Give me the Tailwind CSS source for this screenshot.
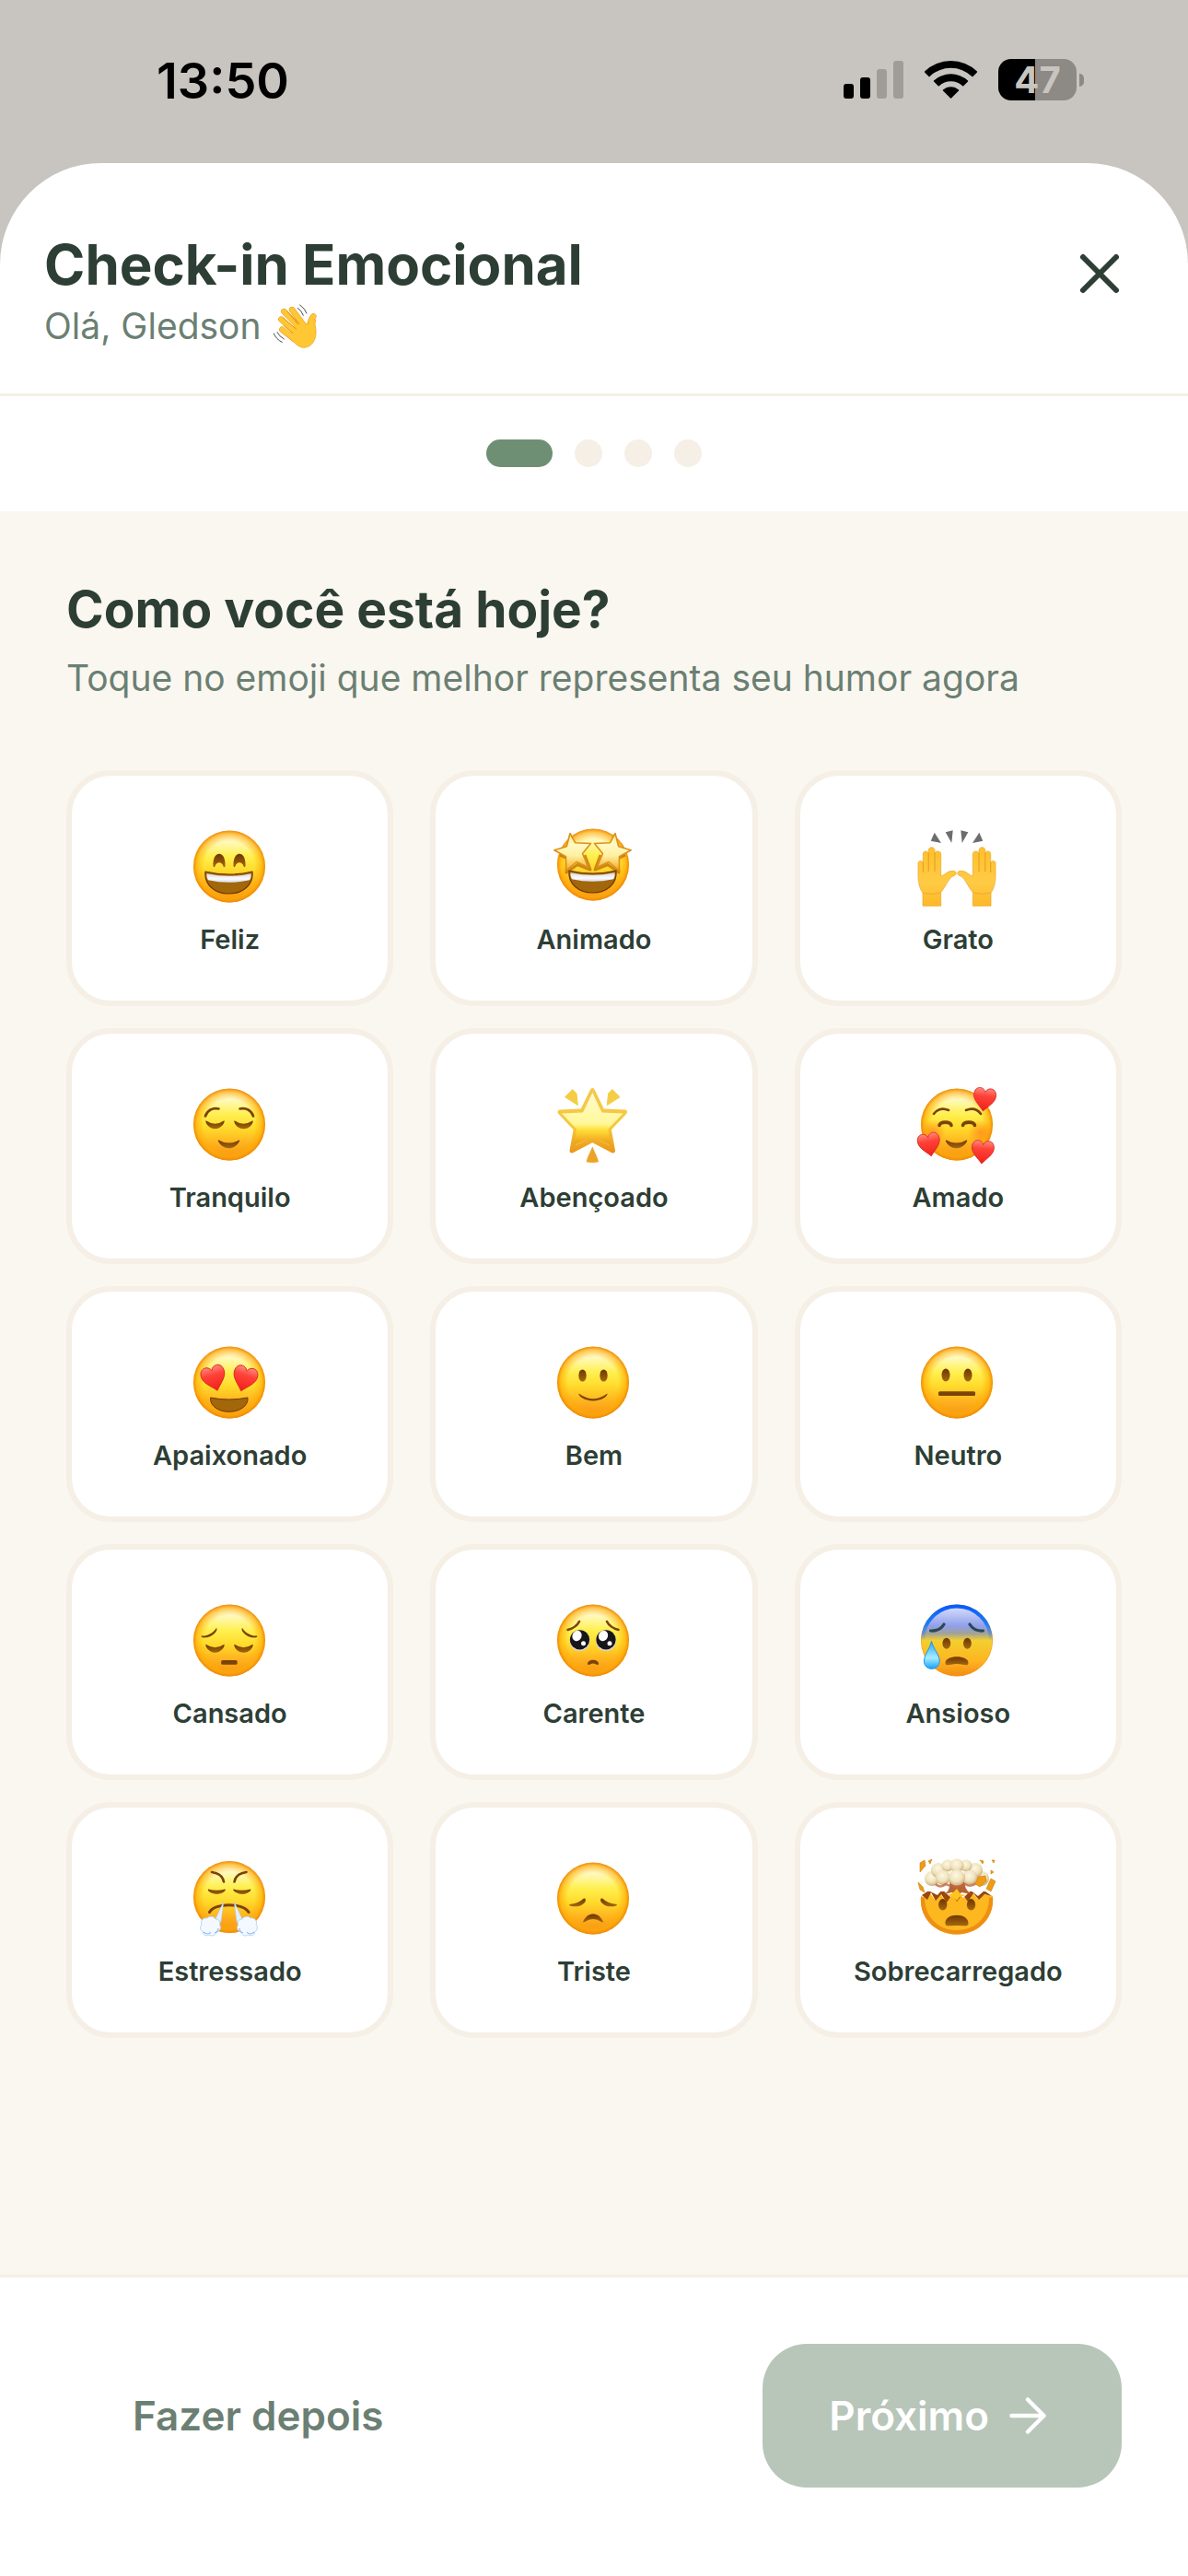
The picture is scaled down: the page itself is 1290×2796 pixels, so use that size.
<!DOCTYPE html>
<html lang="pt-BR">
<head>
    <meta charset="UTF-8">
    <meta name="viewport" content="width=device-width, initial-scale=1.0">
    <title>Check-in Emocional</title>
    <script src="https://cdn.jsdelivr.net/npm/@tailwindcss/browser@4"></script>
</head>
<body class="min-h-screen flex flex-col bg-[#c8c4bf] font-['Inter','Liberation_Sans',sans-serif] text-[#2d3e35]">

    <!-- shared emoji parts -->
    <svg class="absolute w-0 h-0" aria-hidden="true">
        <defs>
            <linearGradient id="skin" x1="0" y1="0" x2="0" y2="1">
                <stop offset="0" stop-color="#fffde0"/>
                <stop offset=".12" stop-color="#fffbd0"/>
                <stop offset=".36" stop-color="#fff050"/>
                <stop offset=".55" stop-color="#ffdb2c"/>
                <stop offset=".76" stop-color="#ffb31f"/>
                <stop offset="1" stop-color="#f28c14"/>
            </linearGradient>
            <radialGradient id="rim">
                <stop offset=".7" stop-color="#ffae00" stop-opacity="0"/>
                <stop offset=".9" stop-color="#ffab08" stop-opacity=".65"/>
                <stop offset="1" stop-color="#ee8806"/>
            </radialGradient>
            <linearGradient id="skinBlue" x1="0" y1="0" x2="0" y2="1">
                <stop offset="0" stop-color="#dfe4ff"/>
                <stop offset=".3" stop-color="#8f9fea"/>
                <stop offset=".4" stop-color="#a0a19a"/>
                <stop offset=".5" stop-color="#f2cf30"/>
                <stop offset=".8" stop-color="#ffb31f"/>
                <stop offset="1" stop-color="#f28c14"/>
            </linearGradient>
            <linearGradient id="rimFade" x1="0" y1="0" x2="0" y2="1">
                <stop offset="0" stop-color="#0a5cff"/>
                <stop offset=".25" stop-color="#1e7bf2"/>
                <stop offset=".5" stop-color="#1e7bf2" stop-opacity="0"/>
            </linearGradient>
            <linearGradient id="starFill" x1="0" y1="0" x2="0" y2="1">
                <stop offset="0" stop-color="#ffeb7a"/>
                <stop offset=".3" stop-color="#fff9c4"/>
                <stop offset=".6" stop-color="#fff0a0"/>
                <stop offset="1" stop-color="#f5a81c"/>
            </linearGradient>
            <linearGradient id="bigStar" x1="0" y1="0" x2="0" y2="1">
                <stop offset="0" stop-color="#fffad0"/>
                <stop offset=".6" stop-color="#fff89a"/>
                <stop offset=".72" stop-color="#ffdf3a"/>
                <stop offset="1" stop-color="#ee9a18"/>
            </linearGradient>
            <linearGradient id="bigStarEdge" x1="0" y1="0" x2="0" y2="1">
                <stop offset="0" stop-color="#f3c94e"/>
                <stop offset=".6" stop-color="#f6c83c"/>
                <stop offset="1" stop-color="#ea9a1c"/>
            </linearGradient>
            <linearGradient id="handFill" x1="0" y1="0" x2="0" y2="1">
                <stop offset="0" stop-color="#ffc02a"/>
                <stop offset=".6" stop-color="#ffcb45"/>
                <stop offset="1" stop-color="#fdb827"/>
            </linearGradient>
            <linearGradient id="heartFill" x1="0" y1="0" x2="0" y2="1">
                <stop offset="0" stop-color="#ff8a80"/>
                <stop offset=".35" stop-color="#ff4238"/>
                <stop offset="1" stop-color="#f0201c"/>
            </linearGradient>
            <linearGradient id="brown" x1="0" y1="0" x2="0" y2="1">
                <stop offset="0" stop-color="#6e3604"/>
                <stop offset="1" stop-color="#a4690c"/>
            </linearGradient>
            <linearGradient id="teeth" x1="0" y1="0" x2="0" y2="1">
                <stop offset="0" stop-color="#d9dbe4"/>
                <stop offset=".6" stop-color="#fbfbff"/>
                <stop offset="1" stop-color="#d5d8e0"/>
            </linearGradient>
            <linearGradient id="drop" x1="0" y1="0" x2="0" y2="1">
                <stop offset="0" stop-color="#2aa6f0"/>
                <stop offset=".6" stop-color="#a6ecff"/>
                <stop offset="1" stop-color="#18a0fb"/>
            </linearGradient>
            <radialGradient id="blush">
                <stop offset="0" stop-color="#ff7a18" stop-opacity=".65"/>
                <stop offset="1" stop-color="#ff7a18" stop-opacity="0"/>
            </radialGradient>
            <radialGradient id="puff" cx=".45" cy=".35" r=".65">
                <stop offset="0" stop-color="#fdf8e4"/>
                <stop offset=".6" stop-color="#efe3bd"/>
                <stop offset="1" stop-color="#cfac7a"/>
            </radialGradient>
            <g id="face">
                <circle cx="49" cy="50.5" r="39" fill="url(#skin)"/>
                <circle cx="49" cy="50.5" r="39" fill="url(#rim)"/>
            </g>
            <g id="grin">
                <path d="M23 56Q48.500 62 74 56C75.500 70 64 80 48.500 80S21.500 70 23 56Z" fill="#a2670b" stroke="#713805" stroke-width="1.200" stroke-linejoin="round"/>
                <path d="M24.500 58.200Q48.500 63.500 72.500 58.200C73 62 72 64 71 65.200Q48.500 70.500 26 65.200C25 63 24 61 24.500 58.200Z" fill="url(#teeth)"/>
            </g>
            <path id="closedEye" d="M23.500 46.300Q33.500 53 43.500 46.300C44.500 49 40 55.200 33.500 55.200S22.500 49 23.500 46.300Z" fill="url(#brown)"/>
            <path id="smallSmile" d="M37 67.200Q48.500 74 60 67.200C61 69 56 76.300 48.500 76.300S36 69 37 67.200Z" fill="url(#brown)"/>
            <path id="heart" d="M12 25C7 19 0 14.500 0 7.500C0-1.500 10-2 12 4.500C14-2 24-1.500 24 7.500C24 14.500 17 19 12 25Z" fill="url(#heartFill)" stroke="#d8231f" stroke-width=".8"/>
            <path id="sadBrow" d="M18.800 45.500C25 46 31 43 35 37C37.500 39 31 48 21 47.500C19 47.300 18.300 46.500 18.800 45.500Z" fill="#7b4306"/>
            <path id="eyeStar" d="M24 14.500L29.500 24.700L46.500 25.500L37.500 36.500L43.800 51.500L31 45.500L19.700 55L19.500 39.700L6.800 32.700L20.300 28.800Z" fill="url(#starFill)" stroke="#dd8f1c" stroke-width="1.600" stroke-linejoin="round"/>
            <g id="palm">
                <path d="M12 93.300V79C8 74 7 66 7 60V47C7 43.500 12.300 43.500 12.300 47V37C12.300 33 18.200 33 18.200 37V33C18.200 28.500 25 28.500 25 33V37C25 33 31.700 33 31.700 37V61C36 60 38 55.500 44 55.300C49 55 49.500 59 46 60.500C40 62.500 38 71 31.700 78.500V93.300Z" fill="url(#handFill)" stroke="#eba52a" stroke-width=".7"/>
                <path d="M12.300 46V57M18.200 36V56M25 36V56" fill="none" stroke="#e59a1e" stroke-width="1"/>
                <path d="M12 79Q21 82 31 79" fill="none" stroke="#f0a928" stroke-width="1"/>
            </g>
            <g id="ticks" fill="#6d6d6d">
                <path d="M24.700 13.700L20.700 22.700L32 25Z"/>
                <path d="M36.700 13.300L44.700 11.300L43.300 25Z"/>
            </g>
            <g id="steam">
                <path d="M42.800 54L34 73L40 76Z" fill="#e3f0ff" stroke="#a9cdf5" stroke-width=".5"/>
                <path d="M25 72C27 69 33 70 34 73C38 73 40 76 38.500 79C41 83 38 87 35 87C34 91 30 92 28 90C24 92 20 90 20.500 87C17 85 17 81 19 79C17 75 21 71 25 72Z" fill="#f4f9ff" stroke="#b4d4fa" stroke-width="1"/>
                <path d="M21 87Q26 91 29 87M33 88Q37 87 37 83" fill="none" stroke="#8fbcf5" stroke-width="1.200"/>
            </g>
        </defs>
    </svg>

    <!-- status bar -->
    <div class="h-[177px] shrink-0 flex items-start justify-between pt-[54px] pl-[170px] pr-[113px] text-black">
        <span class="text-[54px] leading-[68px] font-semibold">13:50</span>
        <div class="flex items-center gap-[23px] pt-[10px]">
            <svg class="w-[65px] h-[45px]" viewBox="0 0 65 45" aria-hidden="true">
                <rect x="0" y="27" width="11" height="16" rx="3"/>
                <rect x="18" y="20" width="11" height="23" rx="3"/>
                <rect x="36" y="11" width="11" height="32" rx="3" fill="#a09c97"/>
                <rect x="54" y="2" width="11" height="41" rx="3" fill="#a09c97"/>
            </svg>
            <svg class="w-[57px] h-[45px]" viewBox="0 0 57 45" aria-hidden="true">
                <path d="M0 13.500A41 41 0 0 1 57 13.500Q57.500 14 57 14.500L52.500 19Q52 19.500 51.400 19A33 33 0 0 0 5.600 19Q5 19.500 4.500 19L0 14.500Q-.5 14 0 13.500Z"/>
                <path d="M10 23.500A27.500 27.500 0 0 1 47 23.500Q47.500 24 47 24.500L42.300 29.200Q41.800 29.700 41.200 29.200A19 19 0 0 0 15.800 29.200Q15.200 29.700 14.700 29.200L10 24.500Q9.500 24 10 23.500Z"/>
                <path d="M20 33.500A12.500 12.500 0 0 1 37 33.500Q37.500 34 37 34.500L29 42.500Q28.500 43 28 42.500L20 34.500Q19.500 34 20 33.500Z"/>
            </svg>
            <div class="flex items-center gap-[3px]">
                <div class="w-[85px] h-[45px] rounded-[14px] bg-linear-to-r from-black from-47% to-[#8d8985] to-47% flex items-center justify-center text-[40px] leading-[45px] font-bold text-[#c8c4bf]">47</div>
                <div class="w-[5px] h-[14px] rounded-r-full bg-[#8d8985]"></div>
            </div>
        </div>
    </div>

    <div class="grow flex flex-col bg-white rounded-t-[110px] overflow-hidden">
        <header class="flex items-start justify-between px-12 pt-[72px] pb-12 border-b-3 border-[#f5efe6]">
            <div>
                <h1 class="text-[60px] leading-[76px] font-bold">Check-in Emocional</h1>
                <p class="mt-1 flex items-center gap-3 text-[39px] leading-[50px] text-[#6b7f73]">
                    Olá, Gledson
                    <svg class="w-[50px] h-[50px]" viewBox="50 55 150 150" role="img" aria-label="Mão acenando">
                        <g fill="none" stroke-linecap="round" stroke-linejoin="round">
                            <g stroke="#e89c1c" stroke-width="19">
                                <path d="M113 76L150 125M87 82L135 132M78 108L122 148M81 141L120 172M183 98Q172 110 172 130"/>
                            </g>
                            <path d="M122 130L150 118L166 124Q178 108 190 108Q186 125 191 142C194 176 176 199 152 200C132 199 122 184 104 166Z" fill="#ffc734" stroke="#e89c1c" stroke-width="2"/>
                            <g stroke="#ffc734" stroke-width="16">
                                <path d="M113 76L152 128M87 82L140 140M78 108L130 155M81 141L125 175M183 98Q172 110 174 134"/>
                            </g>
                            <path d="M98 82L132 123M85 103L127 140M86 128L116 153" stroke="#dd8c14" stroke-width="2.500"/>
                            <g stroke="#4d4d4d" stroke-width="3">
                                <path d="M132 71Q145 80 150 95M139 61Q155 72 161 88M54 154Q62 174 81 182M65 150Q72 164 87 172"/>
                            </g>
                        </g>
                    </svg>
                </p>
            </div>
            <button type="button" aria-label="Fechar" class="w-24 h-24 flex items-center justify-center">
                <svg class="w-[72px] h-[72px]" viewBox="0 0 24 24" fill="none" stroke="currentColor" stroke-width="2" stroke-linecap="round">
                    <path d="M18 6L6 18M6 6l12 12"/>
                </svg>
            </button>
        </header>

        <div class="flex justify-center gap-6 pt-[47px] pb-12">
            <span class="w-[72px] h-[30px] rounded-full bg-[#6f8f74]"></span>
            <span class="w-[30px] h-[30px] rounded-full bg-[#f5efe6]"></span>
            <span class="w-[30px] h-[30px] rounded-full bg-[#f5efe6]"></span>
            <span class="w-[30px] h-[30px] rounded-full bg-[#f5efe6]"></span>
        </div>

        <main class="grow bg-[#faf7f0] p-[72px]">
            <h2 class="text-[55px] leading-[68px] font-bold">Como você está hoje?</h2>
            <p class="mt-3 text-[39px] leading-[58px] text-[#6b7f73]">Toque no emoji que melhor representa seu humor agora</p>

            <div class="mt-[71px] grid grid-cols-3 gap-x-10 gap-y-6 text-[29px] leading-9 font-semibold">
                <button type="button" class="flex flex-col items-center gap-3 py-12 rounded-[48px] border-6 border-[#f5efe6] bg-white">
                    <svg class="w-[100px] h-[100px]" viewBox="0 0 100 100" aria-hidden="true">
                        <use href="#face"/>
                        <path id="arch" d="M31.500 50C31 42 34 36.800 38 36.800S45 42 44.500 50C44.300 51.500 43 51.500 42.500 50.200C41 45 35 45 33.500 50.200C33 51.500 31.700 51.500 31.500 50Z" fill="url(#brown)"/>
                        <use href="#arch" x="22"/>
                        <use href="#grin"/>
                    </svg>
                    <span>Feliz</span>
                </button>
                <button type="button" class="flex flex-col items-center gap-3 py-12 rounded-[48px] border-6 border-[#f5efe6] bg-white">
                    <svg class="w-[100px] h-[100px]" viewBox="0 0 100 100" aria-hidden="true">
                        <use href="#face" y="-2"/>
                        <path d="M13 38L21 42L20 57L32 48.500L46 54L40 38M84 38L76 42L77 57L65 48.500L51 54L57 38" fill="none" stroke="#b96208" stroke-opacity=".7" stroke-width="3" stroke-linejoin="round"/>
                        <use href="#grin" y="-1"/>
                        <use href="#eyeStar"/>
                        <use href="#eyeStar" transform="matrix(-1 0 0 1 97 0)"/>
                    </svg>
                    <span>Animado</span>
                </button>
                <button type="button" class="flex flex-col items-center gap-3 py-12 rounded-[48px] border-6 border-[#f5efe6] bg-white">
                    <svg class="w-[100px] h-[100px]" viewBox="0 0 100 100" aria-hidden="true">
                        <use href="#ticks"/>
                        <use href="#ticks" transform="matrix(-1 0 0 1 98 0)"/>
                        <use href="#palm"/>
                        <use href="#palm" transform="matrix(-1 0 0 1 98 0)"/>
                    </svg>
                    <span>Grato</span>
                </button>

                <button type="button" class="flex flex-col items-center gap-3 py-12 rounded-[48px] border-6 border-[#f5efe6] bg-white">
                    <svg class="w-[100px] h-[100px]" viewBox="0 0 100 100" aria-hidden="true">
                        <use href="#face"/>
                        <path d="M23 41.500C25 35 31 32 37.500 33.500M75 41.500C73 35 67 32 60.500 33.500" fill="none" stroke="#7b4306" stroke-width="2.600" stroke-linecap="round"/>
                        <use href="#closedEye"/>
                        <use href="#closedEye" x="31"/>
                        <use href="#smallSmile"/>
                    </svg>
                    <span>Tranquilo</span>
                </button>
                <button type="button" class="flex flex-col items-center gap-3 py-12 rounded-[48px] border-6 border-[#f5efe6] bg-white">
                    <svg class="w-[100px] h-[100px]" viewBox="0 0 100 100" aria-hidden="true">
                        <path d="M48.300 13.500L58.500 34.500Q59 36 61 36L83.500 37L67.500 54Q66 55.500 66.500 57L70.500 79L49.500 68Q48.300 67.500 47 68L26 79L30 57Q30.500 55.500 29 54L13 37L35.500 36Q37.500 36 38 34.500Z" fill="url(#bigStar)" stroke="url(#bigStarEdge)" stroke-width="5" stroke-linejoin="round"/>
                        <path d="M48.300 16L58.500 37.500L81.500 38.500L65.500 55.500L68 72L48.300 65L28.600 72L31 55.500L15 38.500L38 37.500Z" fill="url(#bigStar)"/>
                        <path d="M26.800 12.500L18.500 20.700L32.300 29.500L31 17ZM69.800 12.500L78.100 20.700L64.300 29.500L65.600 17Z" fill="#f5cd45" stroke="#f5cd45" stroke-linejoin="round"/>
                        <path d="M48.300 74.500C50 79 54 86 55 91.300Q48.300 92.500 41.600 91.300C42.600 86 46.600 79 48.300 74.500Z" fill="#eba428"/>
                    </svg>
                    <span>Abençoado</span>
                </button>
                <button type="button" class="flex flex-col items-center gap-3 py-12 rounded-[48px] border-6 border-[#f5efe6] bg-white">
                    <svg class="w-[100px] h-[100px]" viewBox="0 0 100 100" aria-hidden="true">
                        <use href="#face"/>
                        <circle cx="23" cy="59" r="14" fill="url(#blush)"/>
                        <circle cx="75" cy="59" r="14" fill="url(#blush)"/>
                        <path d="M24 39C28 33.500 34 32.500 40 35M75 39C71 33.500 65 32.500 59 35" fill="none" stroke="#7b4306" stroke-width="2.600" stroke-linecap="round"/>
                        <path d="M30 51.500C31 47 42 47 43 51.500M55.500 51.500C56.500 47 67.500 47 68.500 51.500" fill="none" stroke="#7b4306" stroke-width="3.600" stroke-linecap="round"/>
                        <use href="#smallSmile"/>
                        <use href="#heart" transform="translate(67 11) rotate(7 12 12)"/>
                        <use href="#heart" transform="translate(7 60) rotate(-10 12 12)"/>
                        <use href="#heart" transform="translate(65 68) rotate(5 12 12)"/>
                    </svg>
                    <span>Amado</span>
                </button>

                <button type="button" class="flex flex-col items-center gap-3 py-12 rounded-[48px] border-6 border-[#f5efe6] bg-white">
                    <svg class="w-[100px] h-[100px]" viewBox="0 0 100 100" aria-hidden="true">
                        <use href="#face"/>
                        <use href="#heart" transform="translate(19 33) rotate(-16 12 12) scale(1.080)"/>
                        <use href="#heart" transform="translate(53 33) rotate(16 12 12) scale(1.080)"/>
                        <path d="M28.600 67Q48.500 71 69 67C70 76 60 82.300 48.700 82.300S27.600 76 28.600 67Z" fill="#a2670b" stroke="#713805" stroke-linejoin="round"/>
                    </svg>
                    <span>Apaixonado</span>
                </button>
                <button type="button" class="flex flex-col items-center gap-3 py-12 rounded-[48px] border-6 border-[#f5efe6] bg-white">
                    <svg class="w-[100px] h-[100px]" viewBox="0 0 100 100" aria-hidden="true">
                        <use href="#face"/>
                        <ellipse cx="37.500" cy="43" rx="4.200" ry="6.600" fill="url(#brown)"/>
                        <ellipse cx="60.500" cy="43" rx="4.200" ry="6.600" fill="url(#brown)"/>
                        <path d="M33.500 62.500Q49 74 64.500 62.500C65.500 65 58 70.500 49 70.500S32.500 65 33.500 62.500Z" fill="#7b4306"/>
                    </svg>
                    <span>Bem</span>
                </button>
                <button type="button" class="flex flex-col items-center gap-3 py-12 rounded-[48px] border-6 border-[#f5efe6] bg-white">
                    <svg class="w-[100px] h-[100px]" viewBox="0 0 100 100" aria-hidden="true">
                        <use href="#face"/>
                        <ellipse cx="37" cy="42.500" rx="4.500" ry="7" fill="url(#brown)"/>
                        <ellipse cx="61" cy="42.500" rx="4.500" ry="7" fill="url(#brown)"/>
                        <rect x="29" y="60.300" width="40" height="4.600" rx="1.500" fill="#7b4306"/>
                    </svg>
                    <span>Neutro</span>
                </button>

                <button type="button" class="flex flex-col items-center gap-3 py-12 rounded-[48px] border-6 border-[#f5efe6] bg-white">
                    <svg class="w-[100px] h-[100px]" viewBox="0 0 100 100" aria-hidden="true">
                        <use href="#face"/>
                        <use href="#sadBrow"/>
                        <use href="#sadBrow" transform="matrix(-1 0 0 1 98 0)"/>
                        <use href="#closedEye" y="8.500"/>
                        <use href="#closedEye" x="31" y="8.500"/>
                        <rect x="40.200" y="72" width="17.400" height="4.800" rx="1.500" fill="#7b4306"/>
                    </svg>
                    <span>Cansado</span>
                </button>
                <button type="button" class="flex flex-col items-center gap-3 py-12 rounded-[48px] border-6 border-[#f5efe6] bg-white">
                    <svg class="w-[100px] h-[100px]" viewBox="0 0 100 100" aria-hidden="true">
                        <use href="#face"/>
                        <path d="M21.500 39C27 37.500 31.500 35 34 30M76.500 39C71 37.500 66.500 35 64 30" fill="none" stroke="#7b4306" stroke-width="2.600" stroke-linecap="round"/>
                        <g id="puppyEye">
                            <circle cx="34.500" cy="51" r="11" fill="#d9d6dc"/>
                            <circle cx="34.500" cy="49.800" r="10.600" fill="#17171b"/>
                            <ellipse cx="31.500" cy="45.500" rx="5" ry="5.800" fill="#fff" transform="rotate(20 31.500 45.500)"/>
                            <circle cx="38.500" cy="53.700" r="2.500" fill="#fff"/>
                        </g>
                        <use href="#puppyEye" x="28.500"/>
                        <path d="M43 76.500C42 70 56 70 55 76.500C53 78 52 75.500 49 75.500S45 78 43 76.500Z" fill="#7b4306"/>
                    </svg>
                    <span>Carente</span>
                </button>
                <button type="button" class="flex flex-col items-center gap-3 py-12 rounded-[48px] border-6 border-[#f5efe6] bg-white">
                    <svg class="w-[100px] h-[100px]" viewBox="0 0 100 100" aria-hidden="true">
                        <circle cx="49" cy="50.500" r="39" fill="url(#rim)"/>
                        <circle cx="49" cy="50.500" r="38.500" fill="url(#skinBlue)"/>
                        <circle cx="49" cy="50.500" r="37" fill="none" stroke="url(#rimFade)" stroke-width="4"/>
                        <path d="M20.500 40C27 40.500 32 38 35 33M77.500 40C71 40.500 66 38 63 33" fill="none" stroke="#2c4856" stroke-width="3.200" stroke-linecap="round"/>
                        <ellipse cx="37.800" cy="53.800" rx="4.400" ry="6" fill="url(#brown)"/>
                        <ellipse cx="60.400" cy="53.800" rx="4.400" ry="6" fill="url(#brown)"/>
                        <path d="M36.500 75C36 66 62 66 61.500 75C61 79.500 57 76 49 76S37 79.500 36.500 75Z" fill="url(#brown)"/>
                        <path d="M21.500 51.500C23.500 60 30.200 66 30.200 73C30.200 78 26.500 81.300 21.800 81.300S13.400 78 13.400 73C13.400 66 19.500 60 21.500 51.500Z" fill="url(#drop)" stroke="#1595f0" stroke-width="1"/>
                    </svg>
                    <span>Ansioso</span>
                </button>

                <button type="button" class="flex flex-col items-center gap-3 py-12 rounded-[48px] border-6 border-[#f5efe6] bg-white">
                    <svg class="w-[100px] h-[100px]" viewBox="0 0 100 100" aria-hidden="true">
                        <use href="#face" y="-1.500"/>
                        <path d="M30 22C37 23 42 27 43 32.500M67.500 22C60.500 23 55.500 27 54.500 32.500" fill="none" stroke="#7b4306" stroke-width="2.600" stroke-linecap="round"/>
                        <path id="flatEye" d="M26 40.500Q35 43 44.500 40.500C46 42 41 46 35.500 46S24.500 42 26 40.500Z" fill="url(#brown)"/>
                        <use href="#flatEye" x="27.500"/>
                        <path d="M27.500 65.500C33 55 64 55 70 65.500" fill="none" stroke="#7b4306" stroke-width="3" stroke-linecap="round"/>
                        <use href="#steam"/>
                        <use href="#steam" transform="matrix(-1 0 0 1 97 0)"/>
                    </svg>
                    <span>Estressado</span>
                </button>
                <button type="button" class="flex flex-col items-center gap-3 py-12 rounded-[48px] border-6 border-[#f5efe6] bg-white">
                    <svg class="w-[100px] h-[100px]" viewBox="0 0 100 100" aria-hidden="true">
                        <use href="#face"/>
                        <path id="droopEye" d="M23.500 57C30 56.500 35 54 39 50.500C41 50 41.500 52.500 40 55C36 60 28 60 24 58.500C23 58 23 57.300 23.500 57Z" fill="url(#brown)"/>
                        <use href="#droopEye" transform="matrix(-1 0 0 1 98 0)"/>
                        <path d="M38 76C41 69.500 45 67.500 49 67.500S57 69.500 60 76C59.500 78 55 73 49 73S38.500 78 38 76Z" fill="url(#brown)"/>
                    </svg>
                    <span>Triste</span>
                </button>
                <button type="button" class="flex flex-col items-center gap-3 py-12 rounded-[48px] border-6 border-[#f5efe6] bg-white">
                    <svg class="w-[100px] h-[100px]" viewBox="0 0 100 100" aria-hidden="true">
                        <path d="M10 48L17 50L20 45L25 52L31 46L37 53L43 45L49 52L54 46L60 52L66 45L72 51L78 46L88 48C90 73 71 89.500 49 89.500S8 73 10 48Z" fill="#fdb71f"/>
                        <path d="M88 49C90 73 71 89.500 49 89.500S8 73 10 49L14 50C14 70 28 85 49 85S84 70 84 50Z" fill="#ef8f12"/>
                        <path d="M11 47L17 52L21 44L26 53L32 46L38 55L44 46L49 54L55 46L61 54L67 45L73 52L79 46L87 48L80 43H17Z" fill="#9a4708"/>
                        <path d="M20 43L28 47L33 41L42 49L49 43L56 50L64 42L72 48L79 42L70 36L28 37Z" fill="#fff"/>
                        <path d="M41 30H58C56 37 60 43 65 46L54 44L49 49L44 44L35 46C41 43 42 37 41 30Z" fill="#b76434"/>
                        <path d="M39 47L44 45L49 40L53 46L59 47L52 49L49 53L45 49Z" fill="#ffc51f"/>
                        <g fill="url(#puff)">
                            <circle cx="22" cy="29" r="8"/>
                            <circle cx="76" cy="29" r="8"/>
                            <circle cx="29" cy="20" r="8"/>
                            <circle cx="69" cy="20" r="8"/>
                            <circle cx="39" cy="15" r="6.500"/>
                            <circle cx="59" cy="15" r="6.500"/>
                            <circle cx="49" cy="15" r="7.500"/>
                            <circle cx="34" cy="28" r="8"/>
                            <circle cx="63" cy="28" r="8"/>
                            <circle cx="49" cy="28" r="9"/>
                        </g>
                        <path d="M26 35Q31 40 37 35Q48 41 58 35Q64 39 70 34" fill="none" stroke="#c0683c" stroke-width="2.500" stroke-opacity=".8"/>
                        <path d="M9 12L14 9L15 15L9 22ZM7 33L12 38L14 44L9 41ZM72 27L80 26L81 32L74 38L69 35ZM86 29L91 32L86 43L81 40ZM18 10L22 8L20 13ZM74 9L78 10L77 13ZM87 9L90 9L89 12ZM86 20L89 22L86 24Z" fill="#ef9c14" stroke="#c97a10" stroke-width=".6"/>
                        <ellipse cx="33.700" cy="57.300" rx="4.600" ry="6.200" fill="url(#brown)"/>
                        <ellipse cx="64.500" cy="57.300" rx="4.600" ry="6.200" fill="url(#brown)"/>
                        <path d="M36.500 78C35 65.500 62.500 65.500 61.500 78C61 81.500 58 80 49 80S37 81.500 36.500 78Z" fill="url(#brown)"/>
                    </svg>
                    <span>Sobrecarregado</span>
                </button>
            </div>
        </main>

        <footer class="flex items-center justify-between border-t-3 border-[#f5efe6] bg-white px-[72px] pt-[72px] pb-24 text-[44px] leading-[60px]">
            <button type="button" class="px-[72px] py-12 font-semibold text-[#6b7f73]">Fazer depois</button>
            <button type="button" class="flex items-center gap-3 rounded-[48px] bg-[#b7c6b9] px-[72px] py-12 font-semibold text-white">
                Próximo
                <svg class="w-[60px] h-[60px]" viewBox="0 0 24 24" fill="none" stroke="currentColor" stroke-width="1.800" stroke-linecap="round" stroke-linejoin="round" aria-hidden="true">
                    <path d="M5 12h14M12 5l7 7-7 7"/>
                </svg>
            </button>
        </footer>
    </div>
</body>
</html>
